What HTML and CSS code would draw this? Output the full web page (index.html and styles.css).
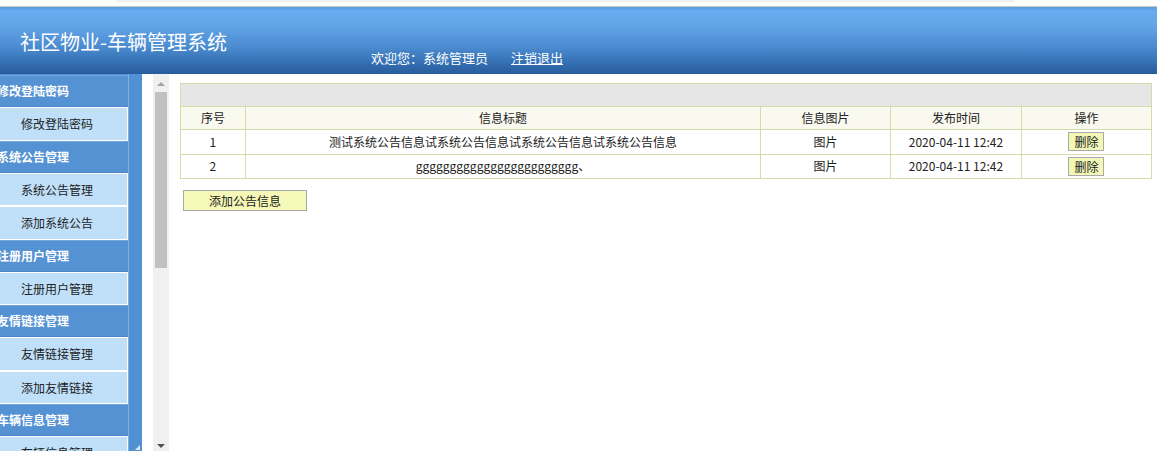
FILE: index.html
```html
<!DOCTYPE html>
<html lang="zh-CN">
<head>
<meta charset="utf-8">
<title>社区物业-车辆管理系统</title>
<link rel="stylesheet" href="styles.css">
</head>
<body>
<div class="topstrip"><div class="tabshadow"></div></div>
<header class="header">
  <div class="title">社区物业-车辆管理系统</div>
  <div class="welcome">欢迎您：系统管理员<a class="logout" href="#">注销退出</a></div>
</header>
<div class="frame">
  <nav class="sidebar">
    <div class="menu">
      <div class="grp">修改登陆密码</div>
      <div class="item">修改登陆密码</div>
      <div class="grp">系统公告管理</div>
      <div class="item">系统公告管理</div>
      <div class="item">添加系统公告</div>
      <div class="grp">注册用户管理</div>
      <div class="item">注册用户管理</div>
      <div class="grp">友情链接管理</div>
      <div class="item">友情链接管理</div>
      <div class="item">添加友情链接</div>
      <div class="grp">车辆信息管理</div>
      <div class="item">车辆信息管理</div>
    </div>
    <div class="strip"><span class="grip"></span></div>
  </nav>
  <div class="scrollbar">
    <span class="arrow up"></span>
    <div class="thumb"></div>
    <span class="arrow down"></span>
  </div>
  <main class="main">
    <table class="list">
      <colgroup>
        <col class="c1"><col class="c2"><col class="c3"><col class="c4"><col class="c5">
      </colgroup>
      <tr class="caption"><td colspan="5"></td></tr>
      <tr class="head">
        <td>序号</td>
        <td>信息标题</td>
        <td>信息图片</td>
        <td>发布时间</td>
        <td>操作</td>
      </tr>
      <tr class="row">
        <td>1</td>
        <td>测试系统公告信息试系统公告信息试系统公告信息试系统公告信息</td>
        <td>图片</td>
        <td>2020-04-11 12:42</td>
        <td><button class="del">删除</button></td>
      </tr>
      <tr class="row">
        <td>2</td>
        <td>gggggggggggggggggggggggg、</td>
        <td>图片</td>
        <td>2020-04-11 12:42</td>
        <td><button class="del">删除</button></td>
      </tr>
    </table>
    <button class="add">添加公告信息</button>
  </main>
</div>
</body>
</html>
```
FILE: styles.css
```css
html, body {
  margin: 0;
  padding: 0;
  background: #fff;
  overflow: hidden;
}
body {
  width: 1157px;
  height: 451px;
  font-family: "Noto Sans CJK SC", "DejaVu Sans", sans-serif;
  font-size: 12px;
  color: #222;
}
.topstrip {
  height: 6px;
  background: #fff;
  border-bottom: 1px solid #c8c8c8;
  overflow: hidden;
}
.tabshadow {
  margin-left: 115px;
  width: 900px;
  height: 2px;
  background: #f1f1f1;
  border-radius: 0 0 6px 6px;
}
.header {
  height: 67px;
  background: linear-gradient(#5b9be0 0px, #66acee 4px, #63a6e8 18px, #4b8bd0 40px, #3571b4 55px, #285c9c 67px);
  position: relative;
  display: flex;
  align-items: flex-end;
}
.title {
  position: absolute;
  left: 20px;
  top: 22px;
  color: #fff;
  font-size: 20px;
  line-height: 26px;
}
.welcome {
  margin-left: 371px;
  margin-bottom: 7px;
  color: #fff;
  font-size: 13px;
  line-height: 18px;
}
.logout {
  color: #fff;
  margin-left: 23px;
  text-decoration: underline;
}
.frame {
  display: flex;
  height: 377px;
}
.sidebar {
  width: 142px;
  display: flex;
  background: #5190d2;
  overflow: hidden;
}
.menu {
  width: 128px;
  padding-top: 1px;
  overflow: hidden;
  border-right: 1px solid #7fb0e2;
}
.grp {
  height: 30px;
  line-height: 30px;
  margin-left: -3px;
  border-top: 1px solid #72a6dc;
  border-bottom: 1px solid #4a86c6;
  background: #5592d3;
  color: #fff;
  font-weight: bold;
  white-space: nowrap;
}
.item {
  height: 31.5px;
  line-height: 31.5px;
  background: #c0e0fa;
  border: 1px solid #fff;
  border-left: none;
  padding-left: 21px;
  color: #222;
  white-space: nowrap;
}
.strip {
  flex: 1;
  position: relative;
}
.grip {
  position: absolute;
  right: 2px;
  bottom: 1px;
  width: 0;
  height: 0;
  border-left: 5px solid transparent;
  border-bottom: 5px solid #dce9f7;
}
.scrollbar {
  margin-left: 11px;
  width: 16px;
  background: #f0f0f0;
  position: relative;
}
.thumb {
  position: absolute;
  left: 2px;
  top: 18px;
  width: 12px;
  height: 176px;
  background: #c1c1c1;
}
.arrow {
  position: absolute;
  left: 4px;
  width: 0;
  height: 0;
  border-left: 4px solid transparent;
  border-right: 4px solid transparent;
}
.arrow.up {
  top: 8px;
  border-bottom: 4px solid #a3a3a3;
}
.arrow.down {
  bottom: 3px;
  border-top: 4px solid #505050;
}
.main {
  flex: 1;
  padding: 9px 5px 0 11px;
}
.list {
  width: 971px;
  border-collapse: collapse;
  table-layout: fixed;
}
.list td {
  border: 1px solid #d5dcaa;
  text-align: center;
  height: 22px;
  padding: 0;
  line-height: 16px;
  white-space: nowrap;
  overflow: hidden;
}
.list tr.caption td {
  background: #e6e6e6;
}
.list tr.head td {
  background: #f9f9f0;
}
.list tr.row td {
  height: 23.5px;
}
.c1 { width: 65px; }
.c2 { width: 515px; }
.c3 { width: 130px; }
.c4 { width: 131px; }
.c5 { width: 130px; }
.del {
  font-family: inherit;
  font-size: 12px;
  line-height: 15px;
  color: #222;
  background: #f3f8b6;
  border: 1px solid #a9a9a9;
  padding: 1px 5px;
  margin: 0;
  height: 19px;
}
.add {
  display: block;
  margin-top: 11px;
  margin-left: 3px;
  width: 124px;
  height: 21px;
  font-family: inherit;
  font-size: 12px;
  line-height: 17px;
  color: #222;
  background: #f5f8b6;
  border: 1px solid #a9a9a9;
  padding: 0;
}
```
